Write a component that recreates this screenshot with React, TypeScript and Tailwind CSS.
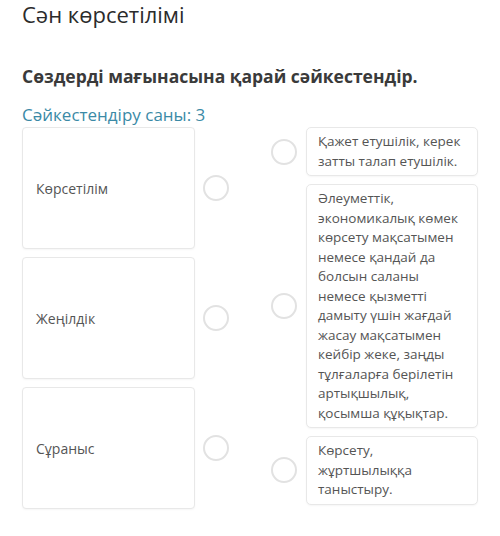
const leftItems = ['Көрсетілім', 'Жеңілдік', 'Сұраныс'];

const rightItems: string[][] = [
  ['Қажет етушілік, керек', 'затты талап етушілік.'],
  [
    'Әлеуметтік,',
    'экономикалық көмек',
    'көрсету мақсатымен',
    'немесе қандай да',
    'болсын саланы',
    'немесе қызметті',
    'дамыту үшін жағдай',
    'жасау мақсатымен',
    'кейбір жеке, заңды',
    'тұлғаларға берілетін',
    'артықшылық,',
    'қосымша құқықтар.',
  ],
  ['Көрсету,', 'жұртшылыққа', 'таныстыру.'],
];

function Dot() {
  return <div className="h-[26px] w-[26px] shrink-0 rounded-full border-2 border-[#e2e2e2] bg-white" />;
}

export default function App() {
  return (
    <div className="h-[536px] w-[500px] overflow-hidden bg-white font-['Open_Sans',sans-serif]">
      <div className="pl-[22px] pt-[1px]">
        <h1 className="text-[22px] font-normal leading-[26px] text-[#2b2b2b]">Сән көрсетілімі</h1>
        <p className="mt-[37px] text-[17.5px] font-bold leading-[24px] text-[#3a3a3a]">
          Сөздерді мағынасына қарай сәйкестендір.
        </p>
        <p className="mt-[15px] text-[17px] leading-[24px] text-[#3b8aa6]">Сәйкестендіру саны: 3</p>
      </div>
      <div className="flex pl-[22px]">
        <div className="flex flex-col gap-[8px]">
          {leftItems.map((t) => (
            <div key={t} className="flex items-center gap-[8px]">
              <div className="flex h-[122px] w-[173px] items-center rounded-[4px] border border-[#e8e8e8] bg-white px-[13px] text-[14px] text-[#555] shadow-[0_1px_2px_rgba(0,0,0,0.04)]">
                {t}
              </div>
              <Dot />
            </div>
          ))}
        </div>
        <div className="ml-[42px] flex flex-col gap-[8px]">
          {rightItems.map((lines, i) => (
            <div key={i} className="flex items-center gap-[9px]">
              <Dot />
              <div className="w-[172px] rounded-[5px] border border-[#e8e8e8] bg-white px-[11px] py-[4px] text-[13.5px] leading-[19.5px] text-[#555] shadow-[0_1px_2px_rgba(0,0,0,0.04)]">
                {lines.map((l, j) => (
                  <div key={j} className="whitespace-nowrap">
                    {l}
                  </div>
                ))}
              </div>
            </div>
          ))}
        </div>
      </div>
    </div>
  );
}
